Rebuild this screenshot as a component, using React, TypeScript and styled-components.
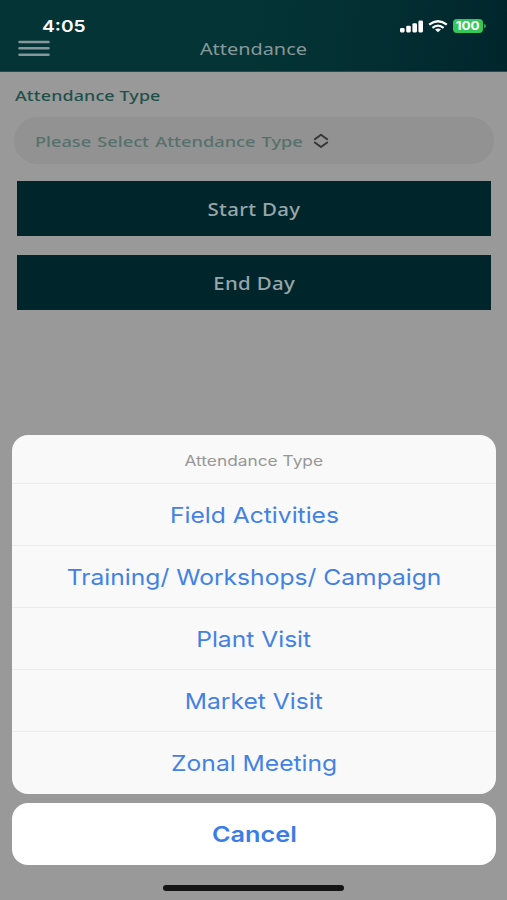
import React from "react";
import styled, { createGlobalStyle } from "styled-components";

const GlobalStyle = createGlobalStyle`
  * { box-sizing: border-box; }
  body { margin: 0; background: #999; }
  button { border: 0; padding: 0; margin: 0; background: none; font: inherit; color: inherit; }
`;

const INTER = `Inter, "Liberation Sans", sans-serif`;
const NOTO = `"Noto Sans", "Open Sans", sans-serif`;

const Screen = styled.div`
  width: 507px;
  height: 900px;
  display: flex;
  flex-direction: column;
  background: #999;
  overflow: hidden;
`;

/* Wide lettering: glyphs are stretched horizontally around their anchor. */
const Wide = styled.span<{ $x: number; $from?: string }>`
  display: inline-block;
  white-space: nowrap;
  transform: scaleX(${(p) => p.$x});
  transform-origin: ${(p) => p.$from ?? "center"} center;
`;

const Header = styled.header`
  flex: none;
  height: 72px;
  background: linear-gradient(97deg, #043435 0%, #043435 50%, #032f33 72%, #00262c 100%);
  border-bottom: 1px solid #244d50;
`;

const StatusBar = styled.div`
  height: 38px;
  padding: 15px 21px 0 42px;
  display: flex;
  justify-content: space-between;
  color: #fff;
`;

const Clock = styled.div`
  font: 600 16px/22px ${INTER};
`;

const StatusIcons = styled.div`
  display: flex;
  height: 22px;
  align-items: center;
`;

const NavBar = styled.div`
  height: 33px;
  padding: 0 18px;
  display: grid;
  grid-template-columns: 32px 1fr 32px;
`;

const MenuIcon = styled.svg`
  display: block;
  margin-top: 1px;
`;

const Title = styled.h1`
  margin: 0;
  text-align: center;
  font: 400 16.5px/21px ${NOTO};
  color: #87989a;
`;

const Form = styled.main`
  padding: 12px 13px 0 14px;
  display: flex;
  flex-direction: column;
`;

const Label = styled.label`
  height: 33px;
  padding-left: 1px;
  font: 500 15px/22px ${NOTO};
  letter-spacing: 0.1px;
  color: #20504a;
`;

const Select = styled.button`
  height: 47px;
  margin-bottom: 16.5px;
  padding-left: 21px;
  display: flex;
  align-items: center;
  border-radius: 24px;
  background: #929292;
  color: #56706c;
  font: 500 15px/22px ${NOTO};
  word-spacing: 1.2px;
`;

const SelectText = styled.span`
  width: 278px;
  text-align: left;
`;

const Action = styled.button`
  height: 55px;
  margin: 0 3px 19.5px;
  background: #00252b;
  color: #98a6a9;
  font: 500 17.5px/56px ${NOTO};
  letter-spacing: 0.3px;
`;

const Sheet = styled.section`
  margin: auto 11px 0 12px;
  display: flex;
  flex-direction: column;
  gap: 9px;
`;

const Options = styled.div`
  height: 359px;
  border-radius: 16px;
  background: #f9f9f9;
  overflow: hidden;
`;

const SheetTitle = styled.div`
  height: 49px;
  text-align: center;
  font: 400 14.2px/51px ${INTER};
  color: #979797;
  border-bottom: 1px solid #ececec;
`;

const Option = styled.button`
  display: block;
  width: 100%;
  height: 62px;
  text-align: center;
  font: 400 21.7px/61px ${INTER};
  color: #4382e4;
  & + & { border-top: 1px solid #ececec; line-height: 63px; }
  &:nth-child(3) { margin-top: -1px; }
`;

const Cancel = styled.button`
  height: 62px;
  border-radius: 16px;
  background: #fff;
  color: #3b7de8;
  font: 600 21.7px/62px ${INTER};
`;

const HomeIndicator = styled.div`
  flex: none;
  width: 181px;
  height: 6px;
  margin: 20px auto 9px 163px;
  border-radius: 3px;
  background: #141414;
`;

const options: string[] = [
  "Field Activities",
  "Training/ Workshops/ Campaign",
  "Plant Visit",
  "Market Visit",
  "Zonal Meeting",
];

function Signal() {
  return (
    <svg width="24" height="13" viewBox="0 0 24 13" fill="#fff">
      <rect x="0" y="8" width="4.6" height="4.4" rx="1.3" />
      <rect x="6.2" y="5.8" width="4.6" height="6.6" rx="1.3" />
      <rect x="12.4" y="3.2" width="4.6" height="9.2" rx="1.3" />
      <rect x="18.4" y="0.6" width="4.6" height="11.8" rx="1.3" />
    </svg>
  );
}

function Wifi() {
  return (
    <svg width="20" height="13" viewBox="0 0 20 13">
      <g fill="none" stroke="#fff" strokeWidth="2.2">
        <path d="M1.2 4.7 Q10 -2.2 18.8 4.7" />
        <path d="M4.4 7.8 Q10 3.3 15.6 7.8" />
      </g>
      <path d="M7 9.6 Q10 7.4 13 9.6 L10 12.3 Z" fill="#fff" />
    </svg>
  );
}

const Battery = styled.div`
  width: 30px;
  height: 14px;
  border-radius: 4px;
  background: #35c759;
  text-align: center;
  font: 700 12px/14px ${INTER};
`;

const BatteryTip = styled.div`
  width: 2px;
  height: 4px;
  margin-left: 1px;
  border-radius: 0 2px 2px 0;
  background: #2a9d50;
`;

const Gap = styled.span<{ $w: number }>`
  width: ${(p) => p.$w}px;
`;

export default function App() {
  return (
    <Screen>
      <GlobalStyle />
      <Header>
        <StatusBar>
          <Clock><Wide $x={1.2} $from="left">4:05</Wide></Clock>
          <StatusIcons>
            <Signal />
            <Gap $w={4.5} />
            <Wifi />
            <Gap $w={5} />
            <Battery><Wide $x={1.12}>100</Wide></Battery>
            <BatteryTip />
          </StatusIcons>
        </StatusBar>
        <NavBar>
          <MenuIcon width="32" height="18" viewBox="0 0 32 18" stroke="#84979a" strokeWidth="2.5" strokeLinecap="round">
            <path d="M1.5 2.9H30.5M1.5 9.3H30.5M1.5 15.7H30.5" />
          </MenuIcon>
          <Title><Wide $x={1.205}>Attendance</Wide></Title>
        </NavBar>
      </Header>
      <Form>
        <Label><Wide $x={1.193} $from="left">Attendance Type</Wide></Label>
        <Select>
          <SelectText><Wide $x={1.213} $from="left">Please Select Attendance Type</Wide></SelectText>
          <svg width="16" height="16" viewBox="0 0 16 16" fill="none" stroke="#343434" strokeWidth="1.9" strokeLinecap="round" strokeLinejoin="round">
            <path d="M1.8 6.2 L8 1.8 L14.2 6.2M1.8 9.6 L8 14 L14.2 9.6" />
          </svg>
        </Select>
        <Action><Wide $x={1.165}>Start Day</Wide></Action>
        <Action><Wide $x={1.165}>End Day</Wide></Action>
      </Form>
      <Sheet>
        <Options>
          <SheetTitle><Wide $x={1.22}>Attendance Type</Wide></SheetTitle>
          {options.map((name) => (
            <Option key={name}><Wide $x={1.135}>{name}</Wide></Option>
          ))}
        </Options>
        <Cancel><Wide $x={1.165}>Cancel</Wide></Cancel>
      </Sheet>
      <HomeIndicator />
    </Screen>
  );
}
